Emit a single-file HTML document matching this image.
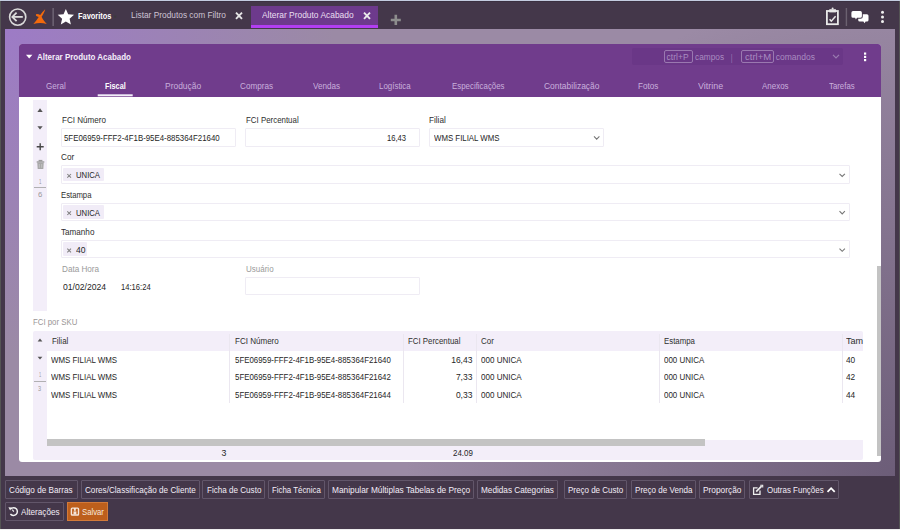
<!DOCTYPE html>
<html><head><meta charset="utf-8"><style>
html,body{margin:0;padding:0;width:900px;height:530px;overflow:hidden;position:relative;font-family:"Liberation Sans",sans-serif}
.t{position:absolute;white-space:nowrap;line-height:1;transform-origin:0 0;font-family:"Liberation Sans",sans-serif}
</style></head><body>
<div style="position:absolute;left:0;top:0;width:900px;height:530px;background:#44374a"></div><div style="position:absolute;left:0;top:0;width:900px;height:1px;background:#c4cce0"></div><div style="position:absolute;left:0;top:1px;width:900px;height:1px;background:#3b3041"></div><div style="position:absolute;left:0;top:529px;width:900px;height:1px;background:#eeeeee"></div><div style="position:absolute;left:0;top:1px;width:1px;height:528px;background:#545454"></div><div style="position:absolute;left:899px;top:1px;width:1px;height:528px;background:#545454"></div><div style="position:absolute;left:5px;top:29px;width:890px;height:447px;background:radial-gradient(circle at 0 0,#9d7bc6 0,rgba(157,123,198,0) 330px),radial-gradient(circle at 100% 100%,#6c5d78 0,rgba(108,93,120,0) 490px),#9b8aa5"></div><svg style="position:absolute;left:0;top:0" width="900" height="30" viewBox="0 0 900 30"><circle cx="17.7" cy="17.1" r="8.1" fill="none" stroke="#d9d9d9" stroke-width="1.6"/><path d="M12.3 16.9 H22.8" stroke="#dcdcdc" stroke-width="1.8" fill="none"/><path d="M16.6 12.6 L12.3 16.9 L16.6 21.2" stroke="#dcdcdc" stroke-width="1.8" fill="none" stroke-linejoin="miter"/><path d="M45.2 9.3 C44.6 11.8 43.2 14.3 41.6 16.8 C42.8 19.6 44.6 21.9 46.8 24 C42.4 22.6 37.9 22.6 33.4 24 C35.4 21.7 37.3 19.3 38.7 17 C37.8 16.7 37 16.5 36.4 16.1 C35.6 15.5 35.8 14.2 36.8 14.1 C38 14.1 39.2 14.5 40.2 15.1 C41.6 12.9 43.3 10.9 45.2 9.3 Z" fill="#f36a0c"/><rect x="52.4" y="8" width="1.5" height="18" fill="#6e6474"/><path d="M65.85 8.90 L68.17 14.28 L74.00 14.82 L69.60 18.69 L70.89 24.40 L65.85 21.41 L60.81 24.40 L62.10 18.69 L57.70 14.82 L63.53 14.28 Z" fill="#ffffff"/><rect x="114" y="15.6" width="2.2" height="2" fill="#3c3a3c"/><path d="M236 12.6 L242 18.8 M242 12.6 L236 18.8" stroke="#e6e6e6" stroke-width="1.9"/><rect x="251" y="6" width="127" height="22" fill="#6d3a8c"/><rect x="251" y="25" width="127" height="3" fill="#b23ef2"/><path d="M364 12.6 L370 18.8 M370 12.6 L364 18.8" stroke="#ececec" stroke-width="1.9"/><path d="M395.8 14.8 V25.1 M390.8 20 H400.8" stroke="#8d8d8d" stroke-width="2.6"/><rect x="826.9" y="11" width="11" height="13.2" fill="none" stroke="#e9e9e9" stroke-width="1.8"/><rect x="829.3" y="9.2" width="6.6" height="3.2" fill="#e9e9e9"/><circle cx="832.6" cy="8.6" r="1" fill="#e9e9e9"/><path d="M829.6 19.2 L831.3 21.2 L835.6 16.3" fill="none" stroke="#e9e9e9" stroke-width="1.5"/><rect x="845.7" y="8" width="1.4" height="18" fill="#6b6170"/><path d="M859.8 14.2 H866.9 Q868.5 14.2 868.5 15.8 V19.9 Q868.5 21.5 866.9 21.5 H865.6 L864.6 23.2 L863.4 21.5 H859.8 Q858.2 21.5 858.2 19.9 V15.8 Q858.2 14.2 859.8 14.2 Z" fill="#ffffff" stroke="#44374a" stroke-width="1.8" paint-order="stroke"/><path d="M853 11.1 H860.3 Q861.9 11.1 861.9 12.7 V16.2 Q861.9 17.8 860.3 17.8 H857 L855.9 19.6 L855.1 17.8 H853 Q851.4 17.8 851.4 16.2 V12.7 Q851.4 11.1 853 11.1 Z" fill="#ffffff" stroke="#44374a" stroke-width="1.8" paint-order="stroke"/><circle cx="882.5" cy="12.3" r="1.5" fill="#f0f0f0"/><circle cx="882.5" cy="16.9" r="1.5" fill="#f0f0f0"/><circle cx="882.5" cy="21.5" r="1.5" fill="#f0f0f0"/></svg><div style="position:absolute;left:19px;top:44px;width:862px;height:418px;background:#ffffff;border-radius:3px;overflow:hidden"><div style="position:absolute;left:0;top:0;width:862px;height:53px;background:#703c8c"></div></div><div style="position:absolute;left:632px;top:48px;width:211px;height:17px;background:#6a3787;border-radius:2px"></div><div style="position:absolute;left:663.5px;top:50.3px;width:27.4px;height:10.4px;border:1px solid #9a78b0;border-radius:2px"></div><div style="position:absolute;left:741.3px;top:50.3px;width:30.7px;height:10.4px;border:1px solid #9a78b0;border-radius:2px"></div><svg style="position:absolute;left:0;top:40px" width="900" height="60" viewBox="0 40 900 60"><path d="M833 54.8 L836 57.8 L839 54.8" fill="none" stroke="#9a7bb0" stroke-width="1.2"/><rect x="864" y="52.5" width="2.2" height="2.2" fill="#fff"/><rect x="864" y="55.8" width="2.2" height="2.2" fill="#fff"/><rect x="864" y="59" width="2.2" height="2.2" fill="#fff"/><path d="M26 54.8 H32.4 L29.2 58.4 Z" fill="#ffffff"/><rect x="97.7" y="94.3" width="35" height="2" fill="#f3eef9"/></svg><div style="position:absolute;left:33px;top:100px;width:14px;height:211px;background:#f3eef9"></div><svg style="position:absolute;left:0;top:95px" width="60" height="110" viewBox="0 95 60 110"><path d="M37.4 112 L40 108.3 L42.7 112 Z" fill="#555555"/><path d="M37.4 126.3 L40 129.6 L42.7 126.3 Z" fill="#555555"/><path d="M40.2 143.3 V150.3 M36.7 146.8 H43.7" stroke="#474747" stroke-width="1.4"/><rect x="36.7" y="161.3" width="7.6" height="1.4" fill="#9a9a9a"/><rect x="38.6" y="159.9" width="3.8" height="1.5" fill="#9a9a9a"/><path d="M37.3 162.8 H43.7 L43.3 168.9 H37.7 Z" fill="#a8a8a8"/><path d="M39.3 164 V167.8 M41.7 164 V167.8" stroke="#c8c8c8" stroke-width="0.8"/><rect x="34" y="187" width="12" height="0.8" fill="#a0a0a0"/></svg><div style="position:absolute;border:1px solid #efecf4;border-radius:1px;background:#fff;box-sizing:border-box;left:61px;top:128px;width:174.5px;height:18.5px"></div><div style="position:absolute;border:1px solid #efecf4;border-radius:1px;background:#fff;box-sizing:border-box;left:245px;top:128px;width:175px;height:18.5px"></div><div style="position:absolute;border:1px solid #efecf4;border-radius:1px;background:#fff;box-sizing:border-box;left:429.3px;top:128px;width:174.7px;height:18.5px"></div><div style="position:absolute;border:1px solid #efecf4;border-radius:1px;background:#fff;box-sizing:border-box;left:61px;top:165.3px;width:788.5px;height:18.5px"></div><div style="position:absolute;border:1px solid #efecf4;border-radius:1px;background:#fff;box-sizing:border-box;left:61px;top:202.8px;width:788.5px;height:18.399999999999977px"></div><div style="position:absolute;border:1px solid #efecf4;border-radius:1px;background:#fff;box-sizing:border-box;left:61px;top:240.2px;width:788.5px;height:18.30000000000001px"></div><div style="position:absolute;border:1px solid #efecf4;border-radius:1px;background:#fff;box-sizing:border-box;left:245px;top:277px;width:174.5px;height:18px"></div><div style="position:absolute;background:#f1ecf7;border-radius:1px;left:63.3px;top:167.8px;width:40.6px;height:13.5px"></div><div style="position:absolute;background:#f1ecf7;border-radius:1px;left:63.3px;top:205px;width:40.3px;height:13.5px"></div><div style="position:absolute;background:#f1ecf7;border-radius:1px;left:63.3px;top:242.4px;width:24.2px;height:13.3px"></div><svg style="position:absolute;left:0;top:100px" width="900" height="200" viewBox="0 100 900 200"><path d="M594 136.4 L596.7 139.1 L599.4 136.4" fill="none" stroke="#777" stroke-width="1.1"/><path d="M67.3 174 L71 177.7 M71 174 L67.3 177.7 M67.3 211.3 L71 215 M71 211.3 L67.3 215 M67.3 248.6 L71 252.3 M71 248.6 L67.3 252.3" stroke="#808080" stroke-width="1.05"/><path d="M839.5 173.8 L842.2 176.5 L844.9 173.8" fill="none" stroke="#777" stroke-width="1.1"/><path d="M839.5 211.2 L842.2 213.9 L844.9 211.2" fill="none" stroke="#777" stroke-width="1.1"/><path d="M839.5 248.6 L842.2 251.3 L844.9 248.6" fill="none" stroke="#777" stroke-width="1.1"/></svg><div style="position:absolute;left:33px;top:331px;width:830px;height:128.5px;background:#f3eef9;border-radius:2px"></div><div style="position:absolute;left:47px;top:351px;width:816px;height:88.5px;background:#ffffff"></div><div style="position:absolute;left:47px;top:439.3px;width:658px;height:6.3px;background:#c3c3c3"></div><div style="position:absolute;left:877px;top:266px;width:4px;height:190px;background:#c3c3c3"></div><div style="position:absolute;left:228.9px;top:334px;width:1px;height:69px;background:#ebe7f0"></div><div style="position:absolute;left:402.8px;top:334px;width:1px;height:69px;background:#ebe7f0"></div><div style="position:absolute;left:475.7px;top:334px;width:1px;height:69px;background:#ebe7f0"></div><div style="position:absolute;left:659.4px;top:334px;width:1px;height:69px;background:#ebe7f0"></div><div style="position:absolute;left:841.6px;top:334px;width:1px;height:69px;background:#ebe7f0"></div><svg style="position:absolute;left:0;top:330px" width="60" height="70" viewBox="0 330 60 70"><path d="M37.6 341.6 L40 338.6 L42.4 341.6 Z" fill="#555555"/><path d="M37.6 356.8 L40 359.6 L42.4 356.8 Z" fill="#555555"/><rect x="34" y="381.2" width="12" height="0.8" fill="#a0a0a0"/></svg><div style="position:absolute;border:1px solid #62566a;box-sizing:border-box;border-radius:1px;left:4.5px;top:480px;width:73.0px;height:18.6px"></div><div style="position:absolute;border:1px solid #62566a;box-sizing:border-box;border-radius:1px;left:80.5px;top:480px;width:119.0px;height:18.6px"></div><div style="position:absolute;border:1px solid #62566a;box-sizing:border-box;border-radius:1px;left:202.3px;top:480px;width:62.69999999999999px;height:18.6px"></div><div style="position:absolute;border:1px solid #62566a;box-sizing:border-box;border-radius:1px;left:268.3px;top:480px;width:56.69999999999999px;height:18.6px"></div><div style="position:absolute;border:1px solid #62566a;box-sizing:border-box;border-radius:1px;left:328.3px;top:480px;width:146.0px;height:18.6px"></div><div style="position:absolute;border:1px solid #62566a;box-sizing:border-box;border-radius:1px;left:477.3px;top:480px;width:80.99999999999994px;height:18.6px"></div><div style="position:absolute;border:1px solid #62566a;box-sizing:border-box;border-radius:1px;left:563.6px;top:480px;width:63.0px;height:18.6px"></div><div style="position:absolute;border:1px solid #62566a;box-sizing:border-box;border-radius:1px;left:630.5px;top:480px;width:65.39999999999998px;height:18.6px"></div><div style="position:absolute;border:1px solid #62566a;box-sizing:border-box;border-radius:1px;left:699px;top:480px;width:46.299999999999955px;height:18.6px"></div><div style="position:absolute;border:1px solid #62566a;box-sizing:border-box;border-radius:1px;left:749px;top:480px;width:90px;height:18.6px"></div><div style="position:absolute;border:1px solid #62566a;box-sizing:border-box;border-radius:1px;left:4.5px;top:502px;width:59.5px;height:18.6px"></div><div style="position:absolute;left:67px;top:502px;width:41.3px;height:18.6px;background:#bd5f1c;border:1px solid #d27a3a;box-sizing:border-box"></div><svg style="position:absolute;left:0;top:470px" width="900" height="60" viewBox="0 470 900 60"><path d="M757.6 487.9 H753.6 V494.3 H760 V490.4" fill="none" stroke="#eee" stroke-width="1.3"/><path d="M756.2 491.6 L761.6 486.2" stroke="#eee" stroke-width="1.7"/><path d="M760.3 485.2 H762.7 V487.6" fill="none" stroke="#eee" stroke-width="1.1"/><path d="M827.5 491.8 L831.1 488.2 L834.7 491.8" fill="none" stroke="#fff" stroke-width="1.8"/><path d="M10.6 508.9 A3.9 3.9 0 1 1 10.4 514" fill="none" stroke="#f2f2f2" stroke-width="1.5"/><path d="M8.4 507.3 L11.8 507.6 L10.2 510.6 Z" fill="#f2f2f2"/><path d="M13.8 511.6 L12.3 509.6" fill="none" stroke="#f2f2f2" stroke-width="1.1"/><rect x="71.4" y="508.1" width="7.1" height="6.9" rx="0.8" fill="none" stroke="#f5e6da" stroke-width="1.4"/><rect x="73.9" y="508" width="1.9" height="2.8" fill="#f5e6da"/><rect x="73.5" y="511.4" width="2.9" height="3" fill="#f5e6da"/></svg>
<div class="t" style="left:77.80px;top:11.68px;font-size:9px;font-weight:700;color:#ffffff;transform:scaleX(0.8271);">Favoritos</div><div class="t" style="left:130.90px;top:9.96px;font-size:9.5px;font-weight:400;color:#cdc3d3;transform:scaleX(0.8773);">Listar Produtos com Filtro</div><div class="t" style="left:262.00px;top:9.96px;font-size:9.5px;font-weight:400;color:#eadff0;transform:scaleX(0.8848);">Alterar Produto Acabado</div><div class="t" style="left:666.60px;top:52.80px;font-size:8.5px;font-weight:400;color:#a98cc0;">ctrl+P</div><div class="t" style="left:695.00px;top:52.80px;font-size:8.5px;font-weight:400;color:#a98cc0;transform:scaleX(0.9759);">campos</div><div class="t" style="left:730.60px;top:53.80px;font-size:8.5px;font-weight:400;color:#a98cc0;transform:scaleX(0.6000);">|</div><div class="t" style="left:744.50px;top:52.80px;font-size:8.5px;font-weight:400;color:#a98cc0;transform:scaleX(1.1161);">ctrl+M</div><div class="t" style="left:775.80px;top:52.80px;font-size:8.5px;font-weight:400;color:#a98cc0;">comandos</div><div class="t" style="left:36.50px;top:53.15px;font-size:8.8px;font-weight:700;color:#f4eefa;transform:scaleX(0.9051);">Alterar Produto Acabado</div><div class="t" style="left:45.70px;top:81.04px;font-size:9.4px;font-weight:400;color:#c9afdc;transform:scaleX(0.8581);">Geral</div><div class="t" style="left:105.00px;top:80.94px;font-size:9.4px;font-weight:700;color:#ffffff;transform:scaleX(0.7816);">Fiscal</div><div class="t" style="left:165.00px;top:81.04px;font-size:9.4px;font-weight:400;color:#c9afdc;transform:scaleX(0.9018);">Produção</div><div class="t" style="left:240.00px;top:81.04px;font-size:9.4px;font-weight:400;color:#c9afdc;transform:scaleX(0.8685);">Compras</div><div class="t" style="left:312.70px;top:81.04px;font-size:9.4px;font-weight:400;color:#c9afdc;transform:scaleX(0.8642);">Vendas</div><div class="t" style="left:379.30px;top:81.04px;font-size:9.4px;font-weight:400;color:#c9afdc;transform:scaleX(0.8458);">Logística</div><div class="t" style="left:452.20px;top:81.04px;font-size:9.4px;font-weight:400;color:#c9afdc;transform:scaleX(0.8402);">Especificações</div><div class="t" style="left:543.70px;top:81.04px;font-size:9.4px;font-weight:400;color:#c9afdc;transform:scaleX(0.9024);">Contabilização</div><div class="t" style="left:638.00px;top:81.04px;font-size:9.4px;font-weight:400;color:#c9afdc;transform:scaleX(0.8670);">Fotos</div><div class="t" style="left:697.70px;top:81.04px;font-size:9.4px;font-weight:400;color:#c9afdc;transform:scaleX(0.9508);">Vitrine</div><div class="t" style="left:761.80px;top:81.04px;font-size:9.4px;font-weight:400;color:#c9afdc;transform:scaleX(0.8486);">Anexos</div><div class="t" style="left:828.80px;top:81.04px;font-size:9.4px;font-weight:400;color:#c9afdc;transform:scaleX(0.8340);">Tarefas</div><div class="t" style="left:39.00px;top:177.87px;font-size:7px;font-weight:400;color:#999;transform:scaleX(0.6250);">1</div><div class="t" style="left:38.20px;top:190.84px;font-size:7.4px;font-weight:400;color:#999;transform:scaleX(1.0500);">6</div><div class="t" style="left:61.60px;top:115.71px;font-size:9.2px;font-weight:400;color:#2e2e2e;transform:scaleX(0.8794);">FCI Número</div><div class="t" style="left:245.60px;top:115.71px;font-size:9.2px;font-weight:400;color:#2e2e2e;transform:scaleX(0.8590);">FCI Percentual</div><div class="t" style="left:429.30px;top:115.71px;font-size:9.2px;font-weight:400;color:#2e2e2e;transform:scaleX(0.8862);">Filial</div><div class="t" style="left:64.30px;top:132.90px;font-size:9.8px;font-weight:400;color:#262626;transform:scaleX(0.8029);">5FE06959-FFF2-4F1B-95E4-885364F21640</div><div class="t" style="left:386.70px;top:132.90px;font-size:9.8px;font-weight:400;color:#262626;transform:scaleX(0.7779);">16,43</div><div class="t" style="left:433.80px;top:132.90px;font-size:9.8px;font-weight:400;color:#262626;transform:scaleX(0.8009);">WMS FILIAL WMS</div><div class="t" style="left:61.20px;top:153.21px;font-size:9.2px;font-weight:400;color:#2e2e2e;transform:scaleX(0.8952);">Cor</div><div class="t" style="left:76.00px;top:171.21px;font-size:9.2px;font-weight:400;color:#262626;transform:scaleX(0.8385);">UNICA</div><div class="t" style="left:61.30px;top:190.51px;font-size:9.2px;font-weight:400;color:#2e2e2e;transform:scaleX(0.8399);">Estampa</div><div class="t" style="left:76.00px;top:208.51px;font-size:9.2px;font-weight:400;color:#262626;transform:scaleX(0.8385);">UNICA</div><div class="t" style="left:61.30px;top:227.81px;font-size:9.2px;font-weight:400;color:#2e2e2e;transform:scaleX(0.8837);">Tamanho</div><div class="t" style="left:75.80px;top:245.81px;font-size:9.2px;font-weight:400;color:#262626;transform:scaleX(0.9298);">40</div><div class="t" style="left:61.50px;top:265.15px;font-size:8.8px;font-weight:400;color:#9a9a9a;transform:scaleX(0.9254);">Data Hora</div><div class="t" style="left:245.70px;top:265.15px;font-size:8.8px;font-weight:400;color:#9a9a9a;transform:scaleX(0.9106);">Usuário</div><div class="t" style="left:63.10px;top:282.95px;font-size:8.8px;font-weight:400;color:#262626;transform:scaleX(0.9788);">01/02/2024</div><div class="t" style="left:121.00px;top:282.95px;font-size:8.8px;font-weight:400;color:#262626;transform:scaleX(0.8646);">14:16:24</div><div class="t" style="left:33.20px;top:318.13px;font-size:9.3px;font-weight:400;color:#9a9696;transform:scaleX(0.8407);">FCI por SKU</div><div class="t" style="left:38.80px;top:372.30px;font-size:6.5px;font-weight:400;color:#9a9a9a;transform:scaleX(0.6000);">1</div><div class="t" style="left:38.30px;top:385.50px;font-size:6.5px;font-weight:400;color:#9a9a9a;transform:scaleX(0.8500);">3</div><div class="t" style="left:51.50px;top:337.30px;font-size:8.5px;font-weight:400;color:#2e2e2e;transform:scaleX(0.9326);">Filial</div><div class="t" style="left:234.50px;top:337.30px;font-size:8.5px;font-weight:400;color:#2e2e2e;transform:scaleX(0.9451);">FCI Número</div><div class="t" style="left:408.00px;top:337.30px;font-size:8.5px;font-weight:400;color:#2e2e2e;transform:scaleX(0.9243);">FCI Percentual</div><div class="t" style="left:481.00px;top:337.30px;font-size:8.5px;font-weight:400;color:#2e2e2e;transform:scaleX(0.9376);">Cor</div><div class="t" style="left:664.20px;top:337.30px;font-size:8.5px;font-weight:400;color:#2e2e2e;transform:scaleX(0.9226);">Estampa</div><div class="t" style="left:846.40px;top:337.30px;font-size:8.5px;font-weight:400;color:#2e2e2e;transform:scaleX(1.0703);">Tam</div><div class="t" style="left:51.20px;top:356.00px;font-size:8.5px;font-weight:400;color:#262626;transform:scaleX(0.9311);">WMS FILIAL WMS</div><div class="t" style="left:234.50px;top:356.00px;font-size:8.5px;font-weight:400;color:#262626;transform:scaleX(0.9265);">5FE06959-FFF2-4F1B-95E4-885364F21640</div><div class="t" style="left:451.16px;top:356.00px;font-size:8.5px;font-weight:400;color:#262626;">16,43</div><div class="t" style="left:481.00px;top:356.00px;font-size:8.5px;font-weight:400;color:#262626;transform:scaleX(0.9464);">000 UNICA</div><div class="t" style="left:664.20px;top:356.00px;font-size:8.5px;font-weight:400;color:#262626;transform:scaleX(0.9349);">000 UNICA</div><div class="t" style="left:846.40px;top:356.00px;font-size:8.5px;font-weight:400;color:#262626;transform:scaleX(0.9766);">40</div><div class="t" style="left:51.20px;top:373.00px;font-size:8.5px;font-weight:400;color:#262626;transform:scaleX(0.9311);">WMS FILIAL WMS</div><div class="t" style="left:234.50px;top:373.00px;font-size:8.5px;font-weight:400;color:#262626;transform:scaleX(0.9265);">5FE06959-FFF2-4F1B-95E4-885364F21642</div><div class="t" style="left:455.88px;top:373.00px;font-size:8.5px;font-weight:400;color:#262626;">7,33</div><div class="t" style="left:481.00px;top:373.00px;font-size:8.5px;font-weight:400;color:#262626;transform:scaleX(0.9464);">000 UNICA</div><div class="t" style="left:664.20px;top:373.00px;font-size:8.5px;font-weight:400;color:#262626;transform:scaleX(0.9349);">000 UNICA</div><div class="t" style="left:846.40px;top:373.00px;font-size:8.5px;font-weight:400;color:#262626;transform:scaleX(0.9766);">42</div><div class="t" style="left:51.20px;top:390.90px;font-size:8.5px;font-weight:400;color:#262626;transform:scaleX(0.9311);">WMS FILIAL WMS</div><div class="t" style="left:234.50px;top:390.90px;font-size:8.5px;font-weight:400;color:#262626;transform:scaleX(0.9265);">5FE06959-FFF2-4F1B-95E4-885364F21644</div><div class="t" style="left:455.88px;top:390.90px;font-size:8.5px;font-weight:400;color:#262626;">0,33</div><div class="t" style="left:481.00px;top:390.90px;font-size:8.5px;font-weight:400;color:#262626;transform:scaleX(0.9464);">000 UNICA</div><div class="t" style="left:664.20px;top:390.90px;font-size:8.5px;font-weight:400;color:#262626;transform:scaleX(0.9349);">000 UNICA</div><div class="t" style="left:846.40px;top:390.90px;font-size:8.5px;font-weight:400;color:#262626;transform:scaleX(0.9766);">44</div><div class="t" style="left:221.50px;top:449.05px;font-size:8.8px;font-weight:400;color:#262626;">3</div><div class="t" style="left:453.30px;top:449.05px;font-size:8.8px;font-weight:400;color:#262626;transform:scaleX(0.9041);">24.09</div><div class="t" style="left:8.90px;top:486.25px;font-size:8.8px;font-weight:400;color:#f3edf7;transform:scaleX(0.9282);">Código de Barras</div><div class="t" style="left:84.50px;top:486.25px;font-size:8.8px;font-weight:400;color:#f3edf7;transform:scaleX(0.9241);">Cores/Classificação de Cliente</div><div class="t" style="left:206.50px;top:486.25px;font-size:8.8px;font-weight:400;color:#f3edf7;transform:scaleX(0.9195);">Ficha de Custo</div><div class="t" style="left:272.00px;top:486.25px;font-size:8.8px;font-weight:400;color:#f3edf7;transform:scaleX(0.8931);">Ficha Técnica</div><div class="t" style="left:332.00px;top:486.25px;font-size:8.8px;font-weight:400;color:#f3edf7;transform:scaleX(0.9466);">Manipular Múltiplas Tabelas de Preço</div><div class="t" style="left:481.00px;top:486.25px;font-size:8.8px;font-weight:400;color:#f3edf7;transform:scaleX(0.9323);">Medidas Categorias</div><div class="t" style="left:567.50px;top:486.25px;font-size:8.8px;font-weight:400;color:#f3edf7;transform:scaleX(0.9104);">Preço de Custo</div><div class="t" style="left:634.50px;top:486.25px;font-size:8.8px;font-weight:400;color:#f3edf7;transform:scaleX(0.9169);">Preço de Venda</div><div class="t" style="left:703.00px;top:486.25px;font-size:8.8px;font-weight:400;color:#f3edf7;transform:scaleX(0.9461);">Proporção</div><div class="t" style="left:766.70px;top:486.25px;font-size:8.8px;font-weight:400;color:#f3edf7;transform:scaleX(0.9053);">Outras Funções</div><div class="t" style="left:20.90px;top:507.75px;font-size:8.8px;font-weight:400;color:#f3edf7;transform:scaleX(0.9273);">Alterações</div><div class="t" style="left:82.00px;top:507.75px;font-size:8.8px;font-weight:400;color:#f7e8dc;transform:scaleX(0.8798);">Salvar</div>
</body></html>
